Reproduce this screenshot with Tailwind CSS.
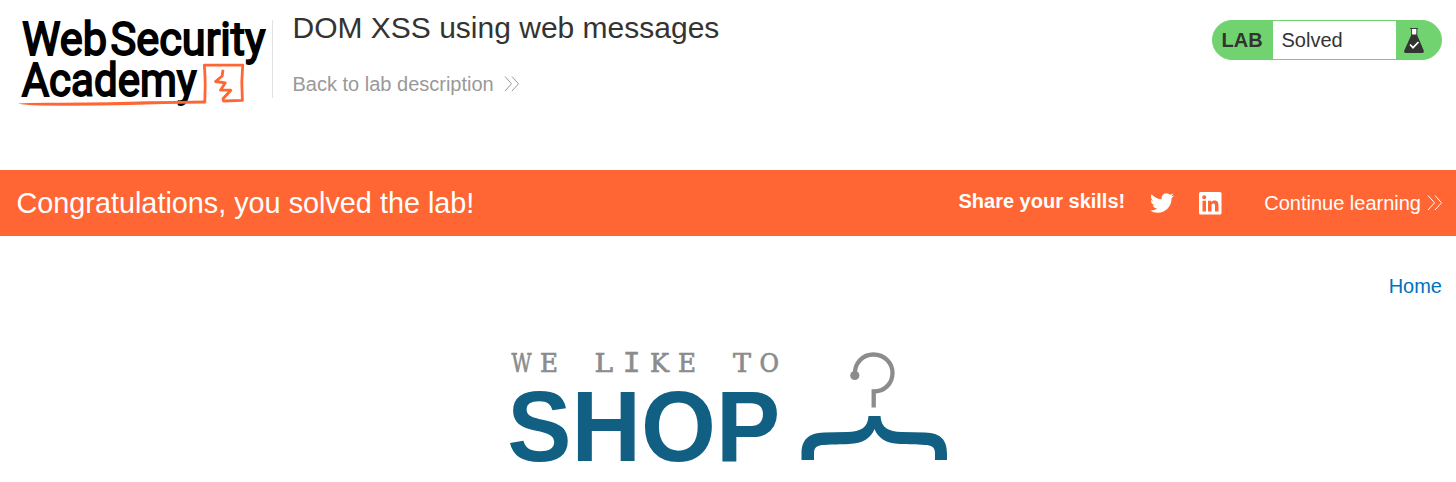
<!DOCTYPE html>
<html lang="en">
<head>
<meta charset="utf-8">
<title>DOM XSS using web messages</title>
<script src="https://cdn.jsdelivr.net/npm/@tailwindcss/browser@4"></script>
</head>
<body class="bg-white font-['Liberation_Sans',Arial,sans-serif] text-xl text-[#333332] overflow-hidden">
<header class="flex h-[170px] items-start">
  <svg class="h-[120px] w-[272px] shrink-0 overflow-visible" viewBox="0 0 272 120" role="img" aria-label="Web Security Academy">
    <g fill="#000" stroke="#000" stroke-width="1.800" font-family="Roboto, sans-serif" font-weight="400" font-size="45.500">
      <text x="22" y="55.200" textLength="85" lengthAdjust="spacingAndGlyphs">Web</text>
      <text x="110.500" y="55.200" textLength="155" lengthAdjust="spacingAndGlyphs">Security</text>
      <text x="21.700" y="96.200" textLength="175" lengthAdjust="spacingAndGlyphs">Academy</text>
    </g>
    <path d="M18 103.600Q30 102.400 60 102.800L110 102.300Q150 101 178 101L205.500 100.500L205.500 103.500Q160 103.800 130 105Q80 106 40 105.500Q24 105.200 18 103.600Z" fill="#f63"/>
    <path d="M204.800 102.500L205.200 85Q205 72 204.300 65.200L242.700 65.200L241.800 82L242.400 100.300L223.500 101L223 98.700L230.800 90.200H220.500L225.300 82.800L215.500 81.500L222.200 76L223 69.800" fill="none" stroke="#f63" stroke-width="2.8" stroke-linejoin="round"/>
  </svg>
  <div class="mt-5 h-[78px] w-px bg-[#e2e2e2]"></div>
  <div class="flex flex-1 flex-col pl-[19.500px] pt-[10px]">
    <h1 class="text-[30px] leading-9">DOM XSS using web messages</h1>
    <a class="mt-[26px] flex items-center gap-[10px] leading-6 text-[#999]">Back to lab description
      <svg class="h-4 w-4" viewBox="0 0 16 16" fill="none" stroke="#999" stroke-width="1"><path d="M1 .5L7.500 7.800L1 15M8 .5L14.500 7.800L8 15"/></svg>
    </a>
  </div>
  <div class="mr-[14px] mt-5 flex h-10 w-[230px] overflow-hidden rounded-[20px] border border-[#71d36f] bg-[#71d36f]">
    <div class="flex w-[60px] items-center pl-[8.500px] font-bold">LAB</div>
    <div class="flex w-[123px] items-center bg-white pb-px pl-[8.500px]">Solved</div>
    <svg class="h-[38px] w-[45px]" viewBox="0 0 45 38">
      <path d="M15.500 8L16 14.500H20.500L21 8Z" fill="#fff"/>
      <path d="M14 7.500H22M15.600 8V14M20.800 8V14" stroke="#333332" stroke-width=".9"/>
      <path d="M15.500 13.500H20.900L27.700 29.500Q28.300 32 26 32H10Q7.500 32 8.300 29.500Z" fill="#333332"/>
      <path d="M14 23.500L17 26.700L22.500 21" fill="none" stroke="#fff" stroke-width="1.700"/>
    </svg>
  </div>
</header>
<section class="flex h-[66px] items-center bg-[#f63] pl-[16.500px] pr-[13px] text-white">
  <h2 class="flex-1 text-[28.8px] leading-9">Congratulations, you solved the lab!</h2>
  <span class="mr-[25px] pb-1 font-bold">Share your skills!</span>
  <svg class="mr-[24.500px] h-6 w-6" viewBox="0 0 24 24" fill="#fff"><path d="M23.950 4.570a10 10 0 0 1-2.820.770 4.960 4.960 0 0 0 2.160-2.720c-.950.550-2 .950-3.130 1.180a4.920 4.920 0 0 0-8.380 4.480C7.690 8.090 4.070 6.130 1.640 3.160a4.820 4.820 0 0 0-.670 2.480c0 1.710.870 3.210 2.190 4.090a4.900 4.900 0 0 1-2.230-.610v.060a4.920 4.920 0 0 0 3.950 4.830 5 5 0 0 1-2.210.080 4.940 4.940 0 0 0 4.600 3.420A9.870 9.870 0 0 1 0 19.540a13.990 13.990 0 0 0 7.560 2.210c9.050 0 14-7.500 14-13.980 0-.210 0-.420-.020-.630a9.940 9.940 0 0 0 2.460-2.550z"/></svg>
  <svg class="mr-[42.500px] h-[23px] w-[23px]" viewBox="0 0 23 23"><rect width="22.500" height="22.500" rx="1.500" fill="#fff"/><circle cx="5.200" cy="5.200" r="2" fill="#f63"/><path d="M3.500 8.700H7V19.500H3.500ZM9 8.700H12.300V10.200C13 9 14.100 8.400 15.600 8.400C18.800 8.400 19.500 10.500 19.500 13.500V19.500H16V14.200C16 12.600 15.900 11.400 14.400 11.400C12.800 11.400 12.500 12.600 12.500 14.200V19.500H9Z" fill="#f63"/></svg>
  <a class="flex items-center gap-[6px]">Continue learning
    <svg class="h-4 w-4" viewBox="0 0 16 16" fill="none" stroke="#fff" stroke-width="1"><path d="M1 .5L7.500 7.800L1 15M8 .5L14.500 7.800L8 15"/></svg>
  </a>
</section>
<nav class="flex justify-end pr-[14px] pt-9 leading-7 text-[#0071bc]">Home</nav>
<main class="flex justify-center">
  <svg class="mt-10 h-[142px] w-[456px]" viewBox="500 340 456 142">
    <text y="371.500" fill="#8c8c8c" stroke="#8c8c8c" stroke-width=".7" font-family="DejaVu Serif, serif" font-size="25.500"><tspan x="511.500" textLength="20" lengthAdjust="spacingAndGlyphs">W</tspan><tspan x="540" textLength="18" lengthAdjust="spacingAndGlyphs">E</tspan> <tspan x="594.500" textLength="18.500" lengthAdjust="spacingAndGlyphs">L</tspan><tspan x="622.800" font-family="Liberation Mono, monospace" font-size="29.500">I</tspan><tspan x="650" textLength="19" lengthAdjust="spacingAndGlyphs">K</tspan><tspan x="678" textLength="18" lengthAdjust="spacingAndGlyphs">E</tspan> <tspan x="733" textLength="18" lengthAdjust="spacingAndGlyphs">T</tspan><tspan x="759.500" textLength="19.500" lengthAdjust="spacingAndGlyphs">O</tspan></text>
    <text x="507.300" y="460.500" fill="#115f83" font-weight="700" font-size="100.500" textLength="273" lengthAdjust="spacingAndGlyphs">SHOP</text>
    <path d="M855 375C854 363 863 354.500 873.500 354.500C884.500 354.500 892.500 363 892.500 373C892.500 384 884 391.500 873.700 391.500V407.500" fill="none" stroke="#8c8c8c" stroke-width="4.300"/>
    <circle cx="854.800" cy="375.500" r="4.600" fill="#8c8c8c"/>
    <path d="M868.500 416H880.500C881 427 888 432 902 432L925 432.500C941 433 947 440 947 454V460H935V453C935 447 931 445 925 445C915 444.300 910 444.500 900 444C886 443.500 878 438 874.500 429C871 438 863 443.500 849 444C839 444.500 834 444.300 824 445C818 445 814 447 814 453V460H801.500V454C801.500 440 808 433 824 432.500L847 432C861 432 868 427 868.500 416Z" fill="#115f83"/>
  </svg>
</main>
</body>
</html>
